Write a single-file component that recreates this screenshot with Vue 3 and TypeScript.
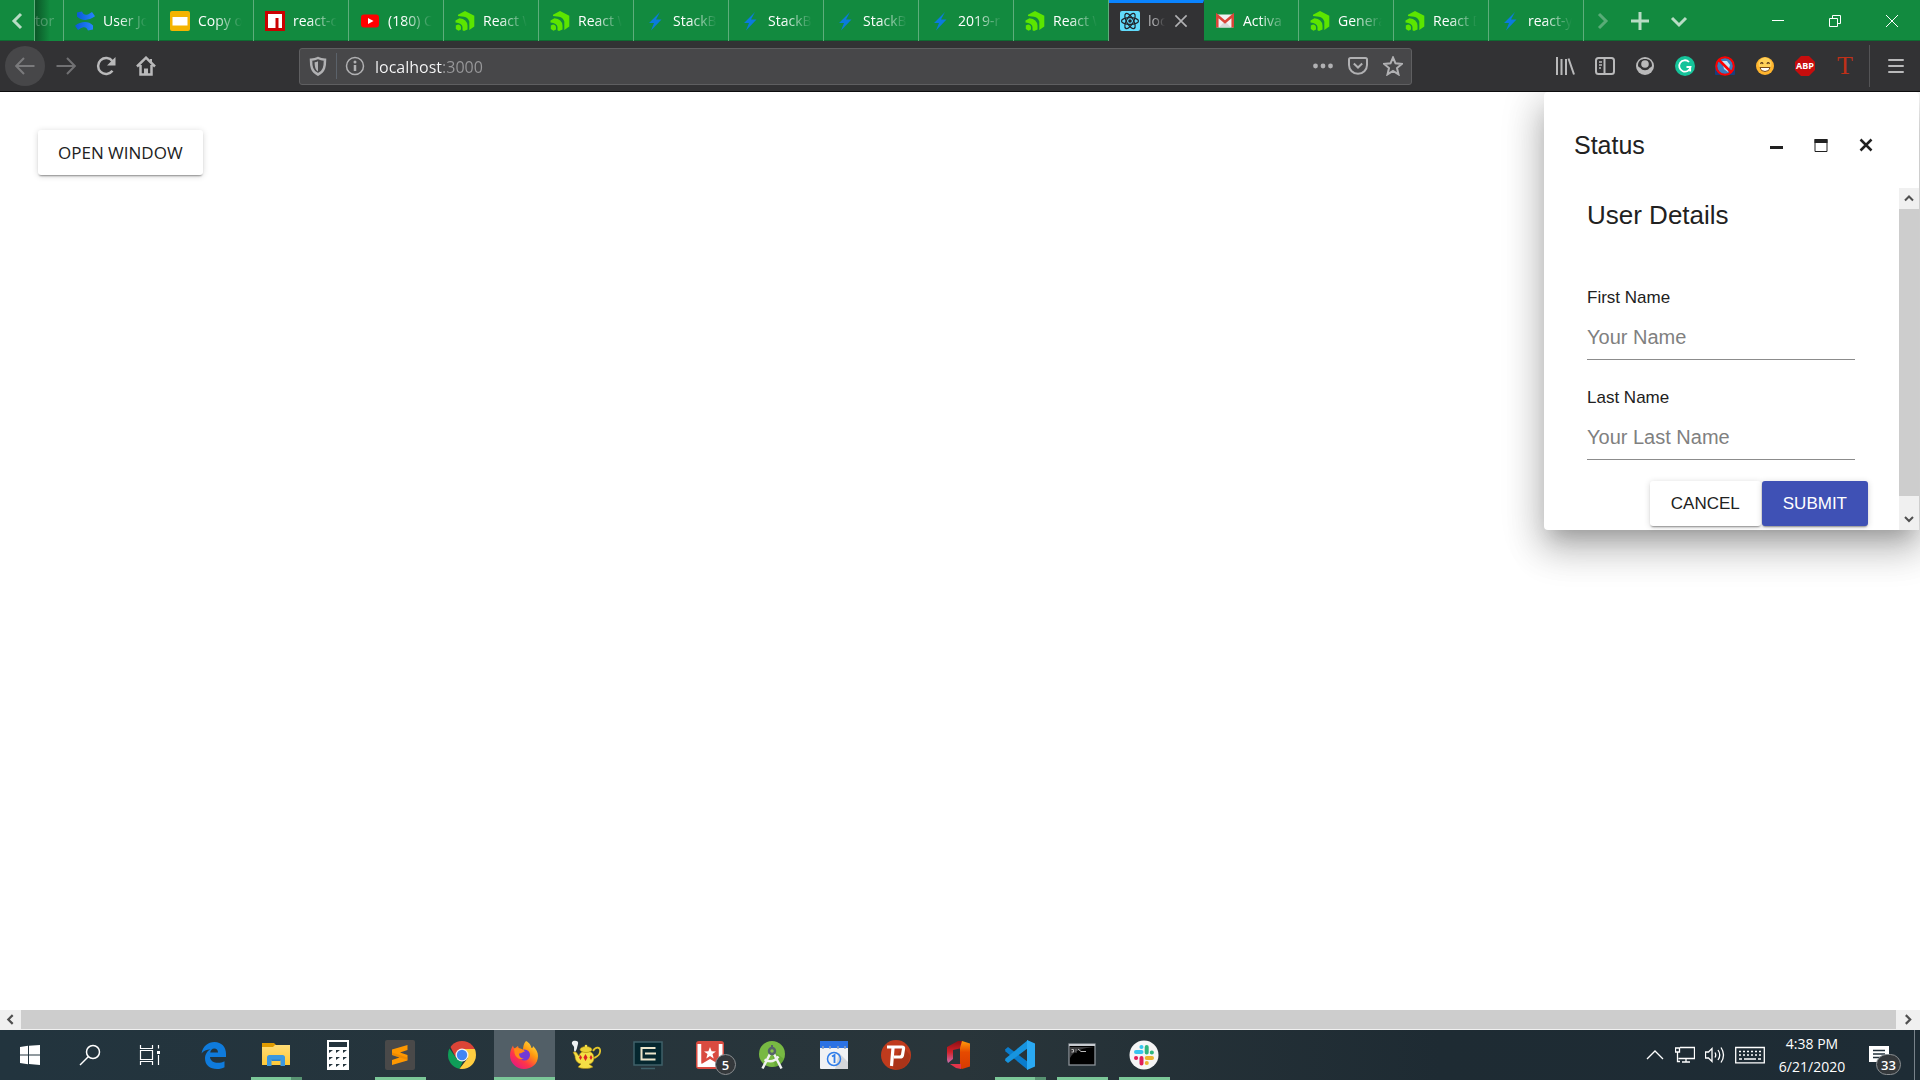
<script setup lang="ts">
import { ref } from 'vue'

interface Tab {
  title: string
  icon: string
  active?: boolean
}

interface Extension {
  name: string
  icon?: string
  text?: string
}

interface TaskApp {
  name: string
  icon: string
  state?: 'open' | 'multi' | 'active'
  badge?: string
}

const tabs: Tab[] = [
  { title: 'User Jo', icon: 'confluence' },
  { title: 'Copy o', icon: 'slides' },
  { title: 'react-c', icon: 'npm' },
  { title: '(180) C', icon: 'youtube' },
  { title: 'React W', icon: 'kendo' },
  { title: 'React W', icon: 'kendo' },
  { title: 'StackB', icon: 'bolt' },
  { title: 'StackB', icon: 'bolt' },
  { title: 'StackB', icon: 'bolt' },
  { title: '2019-r', icon: 'bolt' },
  { title: 'React W', icon: 'kendo' },
  { title: 'loc', icon: 'react', active: true },
  { title: 'Activa', icon: 'gmail' },
  { title: 'Genera', icon: 'kendo' },
  { title: 'React D', icon: 'kendo' },
  { title: 'react-y', icon: 'bolt' },
]

const extensions: Extension[] = [
  { name: 'Library', icon: 'library' },
  { name: 'Sidebars', icon: 'sidebar' },
  { name: 'Account', icon: 'account' },
  { name: 'Grammarly', icon: 'grammarly' },
  { name: 'Blocker', icon: 'blocker' },
  { name: 'Emoji', icon: 'emoji' },
  { name: 'abp', text: 'ABP' },
  { name: 'letter', text: 'T' },
]

const apps: TaskApp[] = [
  { name: 'Edge', icon: 'edge' },
  { name: 'File Explorer', icon: 'folder', state: 'multi' },
  { name: 'Calculator', icon: 'calc' },
  { name: 'Sublime Text', icon: 'sublime', state: 'open' },
  { name: 'Chrome', icon: 'chrome' },
  { name: 'Firefox', icon: 'firefox', state: 'active' },
  { name: 'Teapot', icon: 'teapot' },
  { name: 'Cmder', icon: 'monitor' },
  { name: 'Wunderlist', icon: 'wunder', badge: '5' },
  { name: 'Android Studio', icon: 'android' },
  { name: 'Calendar', icon: 'calendar' },
  { name: 'Psiphon', icon: 'psiphon' },
  { name: 'Office', icon: 'office' },
  { name: 'Visual Studio Code', icon: 'vscode', state: 'multi' },
  { name: 'Command Prompt', icon: 'cmd', state: 'open' },
  { name: 'Slack', icon: 'slack', state: 'open' },
]

const address = ref('localhost:3000')
const firstName = ref('')
const lastName = ref('')
</script>

<template>
  <div class="screen">
    <svg class="sprite" aria-hidden="true">
      <defs>
        <linearGradient id="g-blue" x1="0" y1="0" x2="1" y2="0">
          <stop offset="0" stop-color="#0a5ad6" /><stop offset="1" stop-color="#2684ff" />
        </linearGradient>
        <linearGradient id="g-fox" x1="1" y1="0" x2="0.2" y2="1">
          <stop offset="0" stop-color="#fff44f" /><stop offset="0.4" stop-color="#ff980e" />
          <stop offset="0.7" stop-color="#ff3647" /><stop offset="1" stop-color="#e31587" />
        </linearGradient>
        <linearGradient id="g-office" x1="0" y1="0" x2="0" y2="1">
          <stop offset="0" stop-color="#ff9a0a" /><stop offset="0.4" stop-color="#e64a00" /><stop offset="1" stop-color="#d83b01" />
        </linearGradient>
        <linearGradient id="g-office-l" x1="0" y1="0" x2="0" y2="1">
          <stop offset="0" stop-color="#8c0f14" /><stop offset="0.5" stop-color="#d3222a" /><stop offset="1" stop-color="#c86fb0" />
        </linearGradient>
        <linearGradient id="g-folder" x1="0" y1="0" x2="0" y2="1">
          <stop offset="0" stop-color="#ffdc76" /><stop offset="1" stop-color="#ffc938" />
        </linearGradient>
        <clipPath id="c-chrome"><circle cx="15" cy="15" r="14" /></clipPath>
      </defs>

      <!-- tab favicons -->
      <symbol id="i-confluence" viewBox="0 0 20 20">
        <path fill="url(#g-blue)" d="M2 1.500 7 0.500c1.500 3.500 4 4.500 8 1.800l2-1.300 3 4.300c-6 4.500-13.500 5-18 .2z" />
        <path fill="url(#g-blue)" d="M18 18.500l-5 1c-1.500-3.500-4-4.500-8-1.800l-2 1.300-3-4.300c6-4.500 13.500-5 18-.2z" />
      </symbol>
      <symbol id="i-slides" viewBox="0 0 20 20">
        <rect width="20" height="20" rx="2" fill="#f4b400" /><rect x="2.500" y="6" width="15" height="8.500" fill="#fff" />
      </symbol>
      <symbol id="i-npm" viewBox="0 0 20 20">
        <rect width="20" height="20" fill="#cb0000" /><path fill="#fff" d="M3 3h14v14h-3.500V7h-3v10H3z" />
      </symbol>
      <symbol id="i-youtube" viewBox="0 0 20 20">
        <rect x="1" y="3.500" width="18" height="13" rx="3" fill="#f00" /><path fill="#fff" d="M8 7l5.500 3L8 13z" />
      </symbol>
      <symbol id="i-kendo" viewBox="0 0 20 20">
        <path fill="#5ce500" d="M3 3.700 10 0l9.300 4.800v10.800L14.300 19V10.500Q13 6.500 9 5.800L3 5z" />
        <path fill="#5ce500" d="M.5 9.500 4.500 7.200Q12 8 12.500 14.500V18.500L9 20 7.500 19.300V16Q7 12 .5 11.500z" />
        <path fill="#5ce500" d="M.8 14.500 3 13.600q3 .4 3 3v2L3.500 19.800.8 18z" />
      </symbol>
      <symbol id="i-bolt" viewBox="0 0 20 20"><path fill="#0b7bdc" d="M15 1 4 12h5L6 19.500 16.500 8.500H11z" /></symbol>
      <symbol id="i-react" viewBox="0 0 20 20">
        <rect width="20" height="20" rx="2" fill="#61dafb" />
        <g fill="none" stroke="#20232a" stroke-width="1.200">
          <ellipse cx="10" cy="10" rx="8.500" ry="3.400" />
          <ellipse cx="10" cy="10" rx="8.500" ry="3.400" transform="rotate(60 10 10)" />
          <ellipse cx="10" cy="10" rx="8.500" ry="3.400" transform="rotate(120 10 10)" />
        </g>
        <circle cx="10" cy="10" r="1.800" fill="#20232a" />
      </symbol>
      <symbol id="i-gmail" viewBox="0 0 20 20">
        <rect x="1.500" y="3.500" width="17" height="13" fill="#f2f2f2" /><path fill="#d8d8d8" d="M4 16.500 10 10l6 6.500z" />
        <path fill="none" stroke="#db4437" stroke-width="2.500" d="M2.300 16.500v-12L10 11l7.700-6.500v12" />
      </symbol>

      <!-- browser toolbar -->
      <symbol id="i-left" viewBox="0 0 20 20"><path d="M14 3 7 10l7 7" /></symbol>
      <symbol id="i-right" viewBox="0 0 20 20"><path d="M6 3l7 7-7 7" /></symbol>
      <symbol id="i-down" viewBox="0 0 20 20"><path d="M3 7l7 7 7-7" /></symbol>
      <symbol id="i-plus" viewBox="0 0 20 20"><path d="M9 1v18M0 10h18" /></symbol>
      <symbol id="i-x" viewBox="0 0 20 20"><path d="M3 3l14 14M17 3 3 17" /></symbol>
      <symbol id="i-back" viewBox="0 0 20 20"><path d="M19.500 10H1.500M9 2 1.200 10 9 18" /></symbol>
      <symbol id="i-forward" viewBox="0 0 20 20"><path d="M.5 10h18M11 2l7.800 8L11 18" /></symbol>
      <symbol id="i-reload" viewBox="0 0 20 20">
        <path d="M16.500 14.800A8 8 0 1 1 16.500 5.200" stroke-width="2.500" /><path d="M19.500 1v8.500H11z" fill="currentColor" stroke="none" />
      </symbol>
      <symbol id="i-home" viewBox="0 0 20 20">
        <path d="M1 10.500 10 1.700l9 8.800M4.500 9v9.500h11V9" stroke-width="2.500" />
        <path d="M8 18v-5.500h4V18z" fill="currentColor" stroke="none" /><path d="M15 3v3" />
      </symbol>
      <symbol id="i-shield" viewBox="0 0 20 20">
        <path stroke-width="2.500" d="M10 2C8 3 5 3.600 3 3.700 3 10 3.500 15.500 10 18.500 16.500 15.500 17 10 17 3.700 15 3.600 12 3 10 2z" />
        <path fill="currentColor" stroke="none" d="M10 5.200v10.200C7 13.500 6.700 10 6.600 6.200c1.300-.1 2.200-.4 3.400-1z" />
      </symbol>
      <symbol id="i-info" viewBox="0 0 20 20">
        <circle cx="10" cy="10" r="8.500" stroke-width="1.500" /><path d="M10 9v6" stroke-width="2.500" /><circle cx="10" cy="6" r="1.500" fill="currentColor" stroke="none" />
      </symbol>
      <symbol id="i-dots" viewBox="0 0 20 20">
        <g fill="currentColor" stroke="none"><circle cx="2.500" cy="10" r="2.400" /><circle cx="10" cy="10" r="2.400" /><circle cx="17.500" cy="10" r="2.400" /></g>
      </symbol>
      <symbol id="i-pocket" viewBox="0 0 20 20">
        <path d="M2.500 2h15A1.500 1.500 0 0 1 19 3.500V9A9 8.800 0 0 1 1 9V3.500A1.500 1.500 0 0 1 2.500 2zM5.800 7.500l4.200 4 4.200-4" />
      </symbol>
      <symbol id="i-star" viewBox="0 0 20 20"><path d="M10 1.500l2.500 5.800 6.300.6-4.800 4.200 1.500 6.300L10 15l-5.500 3.400L6 12.100 1.200 7.900l6.300-.6z" /></symbol>
      <symbol id="i-library" viewBox="0 0 20 20"><path d="M2 1v18M6.500 3v16M11 3v16M13.500 2.500l5.500 16" /></symbol>
      <symbol id="i-sidebar" viewBox="0 0 20 20"><rect x="1" y="2" width="18" height="16" rx="2.500" /><path d="M9.500 2v16" /><path d="M4 6h3M4 9h3M4 12h2" stroke-width="1.500" /></symbol>
      <symbol id="i-account" viewBox="0 0 20 20">
        <circle cx="10" cy="10" r="9" fill="currentColor" stroke="none" />
        <path fill="#323234" stroke="none" d="M3 9.500C3 5 6 3 10 3s7 2 7 6.500c0 1.500-2 2-2.500 2.500-1 1.500-2.500 2.200-4.500 2.200S6.500 13.500 5.500 12C5 11.500 3 11 3 9.500z" />
        <circle cx="10" cy="8" r="3.800" fill="currentColor" stroke="none" />
      </symbol>
      <symbol id="i-grammarly" viewBox="0 0 20 20">
        <circle cx="10" cy="10" r="10" fill="#15c39a" stroke="none" /><path d="M14 6A5.700 5.700 0 1 0 15.500 11h-4M15.200 10.500v5" stroke="#fff" stroke-width="1.800" />
      </symbol>
      <symbol id="i-blocker" viewBox="0 0 20 20">
        <rect x="0" y="10" width="20" height="9" rx="1" fill="#173f80" stroke="none" /><circle cx="10" cy="10" r="8" fill="#3d7dbd" stroke="none" />
        <path fill="#c5e5f8" stroke="none" d="M7 5h5l3 4-2 7-4-3z" /><circle cx="10" cy="10" r="8.800" stroke="#f00" /><path d="M4 4l12 12" stroke="#f00" stroke-width="2.500" />
      </symbol>
      <symbol id="i-emoji" viewBox="0 0 20 20">
        <circle cx="10" cy="10" r="9" fill="#ffb52e" stroke="none" /><circle cx="10" cy="8" r="6.500" fill="#ffd15a" stroke="none" />
        <path d="M5.500 7.800q1.300-2.200 2.600 0M11.900 7.800q1.300-2.200 2.600 0" stroke="#5e3b1b" stroke-width="1.300" /><path d="M5 11.500h10q-.5 4-5 4t-5-4z" fill="#fff" stroke="#7a4a17" stroke-width="1" />
      </symbol>
      <symbol id="i-menu" viewBox="0 0 20 20"><path d="M3 4h14M3 10h14M3 16h14" stroke-linecap="round" /></symbol>
      <symbol id="i-minimize" viewBox="0 0 14 14"><path d="M1 6.500h12" /></symbol>
      <symbol id="i-restore" viewBox="0 0 14 14"><path d="M1.500 4.500h8v8h-8zM4.500 4.500v-3h8v8h-3" /></symbol>
      <symbol id="i-close" viewBox="0 0 14 14"><path d="M1 1l12 12M13 1 1 13" /></symbol>

      <!-- taskbar -->
      <symbol id="i-windows" viewBox="0 0 30 30"><path fill="#fff" d="M5 7l8-1.200v8.700H5zM14 5.700 25 5v9.500H14zM5 15.500h8v8.700L5 23zM14 15.500h11V25l-11-1z" /></symbol>
      <symbol id="i-search" viewBox="0 0 30 30"><g fill="none" stroke="#fff" stroke-width="1.500"><circle cx="18" cy="12" r="6.500" /><path d="M13.500 16.500 5 25" /></g></symbol>
      <symbol id="i-taskview" viewBox="0 0 30 30">
        <g fill="none" stroke="#fff" stroke-width="1.200"><path d="M5.500 5v3.500h12V5M5.500 10.500h12v9h-12zM5.500 25v-3.500h12V25M23.500 5v3.500M23.500 15v10" /></g><rect x="22" y="11" width="3" height="3" fill="#fff" />
      </symbol>
      <symbol id="i-edge" viewBox="0 0 30 30">
        <path fill="#0f7bdc" d="M2.500 13.500C4 6 9 2 15.500 2 22.500 2 27 7 27 13.500V17H11c.3 4 3.800 5.800 8 5.800 2.500 0 4.500-.6 6.500-1.600v6C23.500 28.300 21 29 18 29 11 29 6 25 6 18.500c0-4.200 2.300-7.500 5.500-9.200C7.500 9.500 4.300 11 2.500 13.500zM11.200 12.500H19c0-2.500-1.500-4-3.800-4-2.200 0-3.700 1.700-4 4z" />
      </symbol>
      <symbol id="i-folder" viewBox="0 0 30 30">
        <path fill="#e09b00" d="M1 3h12l2 2v5H1z" /><path fill="url(#g-folder)" d="M1 7h11l2-2h15v20H1z" />
        <path fill="#3b98e0" d="M6 26V17.500A2.500 2.500 0 0 1 8.500 15h13a2.500 2.500 0 0 1 2.500 2.500V26h-4.500v-6h-9v6z" /><path fill="#2b7fc9" d="M10.500 19.500h9V21h-9z" />
      </symbol>
      <symbol id="i-calc" viewBox="0 0 30 30">
        <path fill="#fff" d="M4 0h22v30H4z" /><path fill="#24343d" d="M6 2h18v5H6z" />
        <g fill="#24343d"><path d="M6 10h4l-4 3zM13 10h4l-4 3zM20 10h4l-4 3zM6 17h4l-4 3zM13 17h4l-4 3zM20 17h4l-4 3zM6 24h4l-4 3zM13 24h4l-4 3zM20 24h4l-4 3z" /></g>
      </symbol>
      <symbol id="i-sublime" viewBox="0 0 30 30">
        <rect width="30" height="30" rx="2" fill="#494949" /><path fill="#ff9800" d="M7 9.500 22.500 5v5l-7.500 2.500 7.500 2.500v5.500L7 25v-5l7.500-2.500L7 15z" /><path fill="#d97b00" d="M7 12.500V15l15.500 5v-2.500z" opacity=".45" />
      </symbol>
      <symbol id="i-chrome" viewBox="0 0 30 30">
        <g clip-path="url(#c-chrome)"><path fill="#db4437" d="M0 0h30v9H15L9 18z" /><path fill="#0f9d58" d="M0 5l9.500 13.500L16 21l-4 9H0z" /><path fill="#ffcd40" d="M15 9h15v21H11.500l9-11.500z" /></g>
        <circle cx="15" cy="15" r="6.500" fill="#f1f1f1" /><circle cx="15" cy="15" r="5.200" fill="#4285f4" />
      </symbol>
      <symbol id="i-firefox" viewBox="0 0 30 30">
        <path fill="url(#g-fox)" d="M17 1c4 2 5 5 5.500 7 1 0 1.500-.5 1.500-2 3 3 5 6 5 10 0 8-6.500 13-14 13S1 23 1 15.500C1 11 2.500 8 4 5.500c.3 1.500.7 2 1.500 3L9 6l1 3c2 0 3 .5 4 1.500C14 7 14.500 3.500 17 1z" />
        <circle cx="15.500" cy="15" r="5.500" fill="#7139d5" /><path fill="#ff8a16" d="M5 8.500c4-1.500 9 0 11 3-2 0-3 2-6 2 0 3 2 5 5 5-4 2-9-1-9.500-6z" />
      </symbol>
      <symbol id="i-teapot" viewBox="0 0 30 30">
        <path fill="none" stroke="#e2c52a" stroke-width="1.800" d="M22 11c3-5 8-4 7 1-.5 4-4 5-6 6" />
        <path fill="#f4df45" stroke="#a98308" stroke-width=".6" d="M2 12h3l3 4c1-4 4-5 7-5s8 1 8 7c0 4-3 6-5 6l4 3c-4 2-11 2-15 0l3-3c-4-1-6-4-6-8z" />
        <ellipse cx="15" cy="9.500" rx="6" ry="3" fill="#ecd337" stroke="#a98308" stroke-width=".6" /><circle cx="15" cy="6" r="1.300" fill="#f4df45" />
        <g fill="#d92424"><path d="M14.500 14l2 3.500-2 3.500-2-3.500zM9.500 15l1.500 2.500-1.500 2.500L8 17.500zM20 15l1.500 2.500L20 20l-1.500-2.500z" /></g>
        <path fill="#eef2f3" d="M2 1c3-1 6 0 5 3s-1 6-3 8c-2-2 0-4-1.500-6S0 3 2 1z" />
      </symbol>
      <symbol id="i-monitor" viewBox="0 0 30 30">
        <rect x="1" y="2" width="28" height="23" fill="#05272f" stroke="#3f6069" stroke-width="1.500" /><path fill="none" stroke="#ebe5cb" stroke-width="2" d="M22.500 8H8.500v11.500h14M12 13.500h11" /><path stroke="#3f6069" stroke-width="1.500" d="M8 28.500h14" />
      </symbol>
      <symbol id="i-wunder" viewBox="0 0 30 30">
        <rect x="1" y="1" width="28" height="28" rx="3" fill="#d94b40" /><path fill="#fff" d="M2.500 4h4v20l8.500-5 8.500 5V4h4v23h-25z" /><path fill="#d94b40" d="M6.500 1h17v22L15 18l-8.500 5z" />
        <path fill="#fff" d="M15 7l1.600 4.200 4.400.2-3.500 2.700 1.200 4.300L15 16l-3.700 2.400 1.200-4.300L9 11.400l4.400-.2z" />
      </symbol>
      <symbol id="i-android" viewBox="0 0 30 30">
        <circle cx="15" cy="14" r="13" fill="#78b943" /><path fill="#5d9e31" d="M15 10l12 9a13 13 0 0 1-9 8z" opacity=".6" />
        <path stroke="#f1f1f1" stroke-width="2.500" fill="none" d="M13 14 5.500 28.500M17 14l7.500 14.500M7.500 19.500c5 3 10 2 14-3" /><circle cx="15" cy="11" r="3" fill="#8bc34a" stroke="#56636a" stroke-width="2.500" /><path stroke="#56636a" stroke-width="2" d="M15 5v3" />
      </symbol>
      <symbol id="i-calendar" viewBox="0 0 30 30">
        <rect x="1" y="1" width="28" height="28" rx="1" fill="#f1f2f4" /><path fill="#2b72e4" d="M1 1h28v7H1z" /><path fill="#d4d6da" d="M20 13l9 9v7H16z" />
        <path stroke="#8fa3bd" stroke-width="1.500" d="M4 6v3M11 6v3M19 6v3M26 6v3" /><circle cx="15" cy="19" r="6.500" fill="none" stroke="#2f7de9" stroke-width="1.500" />
        <path stroke="#2f7de9" stroke-width="1.800" fill="none" d="M13 16.500l2.500-1.500v8" />
      </symbol>
      <symbol id="i-psiphon" viewBox="0 0 30 30">
        <circle cx="15" cy="15" r="15" fill="#bf3b1d" /><path fill="#8f2a13" d="M22 7l7 8c0 8-6 15-14 15l-6-5z" opacity=".4" />
        <path fill="none" stroke="#fff" stroke-width="3.200" d="M6 7h15q2 0 1.500 2l-1 6q-.5 2-2.500 2h-6M12 8l-1.500 18" />
      </symbol>
      <symbol id="i-office" viewBox="0 0 30 30">
        <path fill="url(#g-office-l)" d="M4 7l11-6h4v7l-9 2v9l-5 4-1-3z" /><path fill="url(#g-office)" d="M19 1l8 2.500v23L19 29l-2-1V8z" /><path fill="#e3344a" d="M7 24h11v5l-5-1z" />
      </symbol>
      <symbol id="i-vscode" viewBox="0 0 30 30">
        <path fill="#0a7ccc" d="M0 9.500 3 7l20 15v8L.5 11.500z" /><path fill="#1794df" d="M0 20.500 3 23 23 8V0L.5 18.500z" /><path fill="#2aa9f3" d="M22 0l8 3.500v23L22 30z" />
      </symbol>
      <symbol id="i-cmd" viewBox="0 0 30 30">
        <rect x="2" y="4" width="26" height="21" fill="#000" stroke="#8b9298" stroke-width="1.300" /><path fill="#c7cbd0" d="M2 4h26v2H2z" /><path fill="#3b3b3d" d="M3 7h24c-10 1-20 3-24 11z" /><path stroke="#bbb" fill="none" d="M4.500 9.500h2v2.500h-2M9 9.500v1M9 11.500v1M11 9l3 2.500h5" />
      </symbol>
      <symbol id="i-slack" viewBox="0 0 30 30">
        <circle cx="15" cy="15" r="14.500" fill="#f5f5f5" />
        <g stroke-width="4" stroke-linecap="round" fill="none">
          <path stroke="#36c5f0" d="M7 12h5.500M12.500 7h-.1" /><path stroke="#2eb67d" d="M17.700 7v5.500M22.800 12.500h.1" />
          <path stroke="#ecb22e" d="M17.700 18H23M17.700 23h.1" /><path stroke="#e01e5a" d="M12.500 18v5.500M7 18h.1" />
        </g>
      </symbol>
      <symbol id="i-up" viewBox="0 0 20 20"><path d="M2 14 10 6l8 8" /></symbol>
      <symbol id="i-network" viewBox="0 0 20 20"><path d="M5 2.500h14.500v11H3.500M.5 3h4v4h-4zM2.500 7v9.500H5M11 14v3M7 17h8" /></symbol>
      <symbol id="i-sound" viewBox="0 0 20 20"><path d="M.5 7h3L7 3.500v13L3.500 13h-3zM10 7.500q1.500 2.500 0 5M13 5q3.500 5 0 10M16 2.500q5 7.500 0 15" /></symbol>
      <symbol id="i-keyboard" viewBox="0 0 30 20"><path d="M.7 2.500h28.600v15.300H.7z" /><path d="M4 6.500h22M4 10h22" stroke-dasharray="2 2" /><path d="M4 14h3M9 14h12M23 14h3" /></symbol>
      <symbol id="i-notes" viewBox="0 0 20 20"><path fill="#fff" stroke="none" d="M0 1h20v16h-7l-3 3v-3H0z" /><path stroke="#22303a" d="M4 5.500h12M4 9h12M4 12.500h8" /></symbol>
    </svg>

    <header class="tab-strip">
      <button class="scroll-left" aria-label="Scroll tabs left"><svg class="ic20 line"><use href="#i-left" /></svg></button>
      <button class="tab-cut"><span class="cut-label">tor</span></button>
      <button v-for="(tab, i) in tabs" :key="i" class="tab" :class="{ active: tab.active }">
        <svg class="ic20"><use :href="'#i-' + tab.icon" /></svg>
        <span class="label">{{ tab.title }}</span>
        <svg v-if="tab.active" class="ic20 line tab-x"><use href="#i-x" /></svg>
      </button>
      <button class="strip-btn dim" aria-label="Scroll tabs right"><svg class="ic20 line"><use href="#i-right" /></svg></button>
      <button class="strip-btn" aria-label="New tab"><svg class="ic20 line"><use href="#i-plus" /></svg></button>
      <button class="strip-btn" aria-label="List all tabs"><svg class="ic20 line"><use href="#i-down" /></svg></button>
      <div class="win-controls">
        <button aria-label="Minimize"><svg class="ic14"><use href="#i-minimize" /></svg></button>
        <button aria-label="Restore"><svg class="ic14"><use href="#i-restore" /></svg></button>
        <button aria-label="Close"><svg class="ic14"><use href="#i-close" /></svg></button>
      </div>
    </header>

    <nav class="toolbar">
      <button class="nav-btn back" aria-label="Back"><svg class="ic20 line"><use href="#i-back" /></svg></button>
      <button class="nav-btn forward" aria-label="Forward"><svg class="ic20 line"><use href="#i-forward" /></svg></button>
      <button class="nav-btn" aria-label="Reload"><svg class="ic20 line"><use href="#i-reload" /></svg></button>
      <button class="nav-btn" aria-label="Home"><svg class="ic20 line"><use href="#i-home" /></svg></button>
      <span class="spring"></span>
      <div class="url-bar">
        <svg class="ic20 line"><use href="#i-shield" /></svg>
        <span class="url-sep"></span>
        <svg class="ic20 line"><use href="#i-info" /></svg>
        <input v-model="address" class="url" type="text" aria-label="Address" />
        <button class="url-btn" aria-label="Page actions"><svg class="ic20 line"><use href="#i-dots" /></svg></button>
        <button class="url-btn" aria-label="Save to Pocket"><svg class="ic20 line"><use href="#i-pocket" /></svg></button>
        <button class="url-btn" aria-label="Bookmark"><svg class="ic20 line"><use href="#i-star" /></svg></button>
      </div>
      <span class="spring"></span>
      <button v-for="ext in extensions" :key="ext.name" class="nav-btn" :aria-label="ext.name">
        <svg v-if="ext.icon" class="ic20 line"><use :href="'#i-' + ext.icon" /></svg>
        <span v-else :class="ext.name">{{ ext.text }}</span>
      </button>
      <span class="menu-sep"></span>
      <button class="nav-btn menu" aria-label="Menu"><svg class="ic20 line"><use href="#i-menu" /></svg></button>
    </nav>

    <main class="page">
      <button class="k-button">OPEN WINDOW</button>

      <section class="dialog" role="dialog" aria-labelledby="dialog-title">
        <header class="dialog-head">
          <h1 id="dialog-title">Status</h1>
          <button aria-label="Minimize"><svg class="glyph" viewBox="0 0 14 14"><path d="M1 9.500h13" stroke="#212121" stroke-width="3" /></svg></button>
          <button aria-label="Maximize">
            <svg class="glyph" viewBox="0 0 14 14"><path d="M1 1.500h12v12H1z" fill="none" stroke="#212121" /><path d="M.5 1h13v4H.5z" fill="#212121" /></svg>
          </button>
          <button aria-label="Close"><svg class="glyph" viewBox="0 0 14 14"><path d="M1.500 1.500l11 11M12.500 1.500l-11 11" stroke="#212121" stroke-width="2.500" /></svg></button>
        </header>
        <div class="dialog-body">
          <form class="form" @submit.prevent>
            <h2>User Details</h2>
            <div class="field">
              <label for="first">First Name</label>
              <input id="first" v-model="firstName" type="text" placeholder="Your Name" />
            </div>
            <div class="field">
              <label for="last">Last Name</label>
              <input id="last" v-model="lastName" type="text" placeholder="Your Last Name" />
            </div>
            <div class="actions">
              <button type="button" class="k-button">CANCEL</button>
              <button type="submit" class="k-button primary">SUBMIT</button>
            </div>
          </form>
          <div class="vbar">
            <svg class="arrow" viewBox="0 0 10 10"><path d="M1 7l4-4 4 4" /></svg>
            <span class="thumb"></span>
            <svg class="arrow end" viewBox="0 0 10 10"><path d="M1 3l4 4 4-4" /></svg>
          </div>
        </div>
      </section>
    </main>

    <div class="hbar">
      <svg class="arrow" viewBox="0 0 10 10"><path d="M7 1 3 5l4 4" /></svg>
      <span class="thumb"></span>
      <svg class="arrow" viewBox="0 0 10 10"><path d="M3 1l4 4-4 4" /></svg>
    </div>

    <footer class="taskbar">
      <button class="sys" aria-label="Start"><svg class="ic30"><use href="#i-windows" /></svg></button>
      <button class="sys" aria-label="Search"><svg class="ic30"><use href="#i-search" /></svg></button>
      <button class="sys" aria-label="Task view"><svg class="ic30"><use href="#i-taskview" /></svg></button>
      <div class="apps">
        <button v-for="app in apps" :key="app.icon" class="app" :class="app.state" :aria-label="app.name">
          <svg class="ic30"><use :href="'#i-' + app.icon" /></svg>
          <span v-if="app.badge" class="badge">{{ app.badge }}</span>
        </button>
      </div>
      <div class="tray">
        <svg class="ic20 thin"><use href="#i-up" /></svg>
        <svg class="ic20 thin"><use href="#i-network" /></svg>
        <svg class="ic20 thin"><use href="#i-sound" /></svg>
        <svg class="kbd thin"><use href="#i-keyboard" /></svg>
        <div class="clock"><span>4:38 PM</span><span>6/21/2020</span></div>
        <button class="notes" aria-label="Notifications">
          <svg class="ic20 thin"><use href="#i-notes" /></svg>
          <span class="badge">33</span>
        </button>
      </div>
    </footer>
  </div>
</template>

<style>
html,
body,
#app {
  height: 100%;
}
</style>

<style scoped>
* {
  box-sizing: border-box;
}
.screen {
  display: flex;
  flex-direction: column;
  min-height: 100%;
  background: #fff;
  font-family: 'Open Sans', 'Noto Sans', sans-serif;
}
.sprite {
  position: absolute;
  width: 0;
  height: 0;
}
button {
  display: flex;
  align-items: center;
  justify-content: center;
  padding: 0;
  border: 0;
  background: none;
  color: inherit;
  font: inherit;
}
svg {
  flex: none;
}
.ic20 {
  width: 20px;
  height: 20px;
}
.ic30 {
  width: 30px;
  height: 30px;
}
.ic14 {
  width: 14px;
  height: 14px;
  fill: none;
  stroke: #fff;
}
.line {
  fill: none;
  stroke: currentColor;
  stroke-width: 2;
}

/* tab strip */
.tab-strip {
  display: flex;
  height: 41px;
  background: #128a3f;
  box-shadow: inset 0 -1px #0e6a31;
  color: #fff;
  font-size: 14px;
}
.scroll-left {
  width: 35px;
  border-right: 1px solid #5ead7b;
  color: #b8dcc5;
}
.scroll-left svg {
  stroke-width: 3;
}
.tab-cut {
  width: 29px;
  justify-content: flex-start;
  border-right: 1px solid #5ead7b;
  background: linear-gradient(to right, #0b5728, #128a3f 15px);
}
.cut-label {
  opacity: 0.25;
}
.tab {
  flex: 0 1 95px;
  min-width: 0;
  gap: 8px;
  padding: 0 11px;
  border-right: 1px solid #5ead7b;
}
.label {
  flex: 1;
  min-width: 0;
  overflow: hidden;
  text-align: left;
  white-space: nowrap;
  mask-image: linear-gradient(to right, #000 35%, transparent 100%);
}
.tab.active {
  padding-bottom: 3px;
  border-top: 3px solid #0a84ff;
  border-right-color: #323234;
  background: #323234;
  color: #b1b1b3;
}
.tab-x {
  width: 16px;
  height: 16px;
  margin-right: 3px;
}
.strip-btn {
  width: 38px;
  color: #b8dcc5;
}
.strip-btn svg {
  stroke-width: 3;
}
.strip-btn.dim {
  color: #59ac77;
}
.win-controls {
  display: flex;
  margin-left: auto;
}
.win-controls button {
  width: 57px;
}

/* toolbar */
.toolbar {
  display: flex;
  align-items: center;
  height: 51px;
  padding-left: 5px;
  border-bottom: 1px solid #0c0c0d;
  background: #323234;
  color: #b9b9ba;
}
.nav-btn {
  width: 40px;
  height: 40px;
}
.back {
  margin-right: 1px;
  border-radius: 50%;
  background: #474749;
  color: #7a7a7c;
}
.forward {
  color: #717173;
}
.spring {
  flex: 0 1 133px;
}
.url-bar {
  display: flex;
  flex: 1 1 600px;
  align-items: center;
  height: 37px;
  padding: 0 8px;
  border: 1px solid #5f5f61;
  border-radius: 3px;
  background: #474749;
  color: #b1b1b3;
}
.url-sep {
  width: 1px;
  height: 26px;
  margin: 0 8px;
  background: #5b626a;
}
.url {
  flex: 1;
  min-width: 0;
  padding: 2px 0 0 10px;
  border: 0;
  outline: 0;
  background: linear-gradient(to right, #f9f9fa 77px, #98989a 77px);
  background-clip: text;
  color: transparent;
  font: 16px/24px 'Open Sans', sans-serif;
}
.url-btn {
  width: 35px;
}
.url-btn:last-child {
  width: 20px;
  margin-left: 8px;
}
.abp {
  width: 20px;
  background: #c70d0d;
  clip-path: polygon(30% 0, 70% 0, 100% 30%, 100% 70%, 70% 100%, 30% 100%, 0 70%, 0 30%);
  color: #fff;
  font-size: 9px;
  font-weight: 700;
  line-height: 20px;
}
.letter {
  color: #c03018;
  font-family: 'Liberation Serif', serif;
  font-size: 26px;
  line-height: 32px;
}
.menu-sep {
  width: 1px;
  height: 42px;
  margin: 0 6px 0 4px;
  background: #545456;
}
.menu {
  margin-right: 4px;
}

/* page */
.page {
  position: relative;
  flex: 1;
  min-height: 460px;
  padding: 38px;
  overflow: hidden;
}
.k-button {
  display: inline-flex;
  height: 45px;
  padding: 0 20px;
  border-radius: 3px;
  background: #fff;
  box-shadow: 0 2px 2px -1px rgba(0, 0, 0, 0.4), 0 1px 6px rgba(0, 0, 0, 0.16);
  color: #212121;
  font-size: 17px;
}
.primary {
  background: #3f51b5;
  color: #fff;
}

/* floating window */
.dialog {
  position: absolute;
  top: 0;
  right: 1px;
  width: 375px;
  border-radius: 4px;
  background: #fff;
  box-shadow: 0 14px 19px -9px rgba(0, 0, 0, 0.2), 0 20px 36px 3px rgba(0, 0, 0, 0.16),
    0 9px 40px 6px rgba(0, 0, 0, 0.14);
  color: #212121;
  font-family: 'Liberation Sans', Arial, sans-serif;
}
.dialog-head {
  display: flex;
  align-items: center;
  height: 96px;
  padding: 10px 31px 0 30px;
}
.dialog-head h1 {
  flex: 1;
  margin: 0;
  font-size: 25px;
  font-weight: 400;
}
.dialog-head button {
  width: 45px;
  height: 45px;
}
.glyph {
  width: 14px;
  height: 14px;
}
.dialog-body {
  display: flex;
}
.form {
  flex: 1;
  padding: 11px 31px 4px 43px;
}
.form h2 {
  margin: 0 0 54px;
  font-size: 26px;
  font-weight: 400;
  line-height: 32px;
}
.field {
  display: flex;
  flex-direction: column;
  margin: 0 13px 25px 0;
}
.field label {
  font-size: 17px;
  line-height: 26px;
}
.field input {
  width: 100%;
  height: 49px;
  padding: 4px 0 0;
  border: 0;
  border-bottom: 1px solid #8c8c8c;
  outline: 0;
  background: none;
  color: #212121;
  font: 20px 'Liberation Sans', Arial, sans-serif;
}
.field input::placeholder {
  color: #808080;
}
.actions {
  display: flex;
  justify-content: flex-end;
  gap: 1px;
  margin-top: -4px;
}
.actions .k-button {
  padding: 0 21px;
}
.thumb {
  flex: 1;
  background: #cdcdcd;
}
.arrow {
  width: 21px;
  height: 19px;
  padding: 4px 5px;
  fill: none;
  stroke: #505050;
  stroke-width: 2;
}
.vbar {
  display: flex;
  flex-direction: column;
  align-items: stretch;
  width: 20px;
  background: #f0f0f0;
}
.vbar .arrow {
  width: 20px;
  height: 21px;
}
.vbar .end {
  height: 34px;
  padding-top: 16px;
}
.hbar {
  display: flex;
  height: 20px;
  border-bottom: 1px solid #f0f0f0;
  background: #f0f0f0;
}
.hbar .arrow:last-child {
  width: 24px;
}

/* taskbar */
.taskbar {
  display: flex;
  height: 50px;
  background: linear-gradient(to right, #22343e, #29353a 50%, #1e2b33 75%, #1e2c35);
  color: #fff;
}
.sys {
  width: 60px;
}
.apps {
  display: flex;
  gap: 1px;
  margin-left: 4px;
}
.app {
  position: relative;
  width: 61px;
  padding-right: 1px;
}
.app.active {
  background: #525f67;
  box-shadow: inset 0 -3px #7bc798;
}
.app.open::after,
.app.multi::after {
  content: '';
  position: absolute;
  right: 5px;
  bottom: 0;
  left: 5px;
  height: 3px;
  background: #7bc798;
}
.app.multi::after {
  background: linear-gradient(to right, #7bc798 40px, #589372 40px);
}
.badge {
  position: absolute;
  display: flex;
  align-items: center;
  justify-content: center;
  min-width: 21px;
  height: 21px;
  border: 1px solid #8b8f92;
  border-radius: 11px;
  background: #34383b;
  font-size: 13px;
  font-weight: 600;
}
.app .badge {
  right: 5px;
  bottom: 5px;
}
.tray {
  display: flex;
  align-items: center;
  gap: 10px;
  margin-left: auto;
  padding-right: 5px;
}
.thin {
  fill: none;
  stroke: #fff;
  stroke-width: 1.3;
}
.kbd {
  width: 30px;
  height: 20px;
}
.clock {
  display: flex;
  flex-direction: column;
  width: 74px;
  font-size: 14px;
  line-height: 23px;
  text-align: center;
}
.notes {
  position: relative;
  height: 50px;
  width: 56px;
  padding-left: 10px;
  justify-content: flex-start;
  border-right: 1px solid #78828a;
}
.notes .badge {
  right: 13px;
  bottom: 5px;
  width: 25px;
}
</style>
